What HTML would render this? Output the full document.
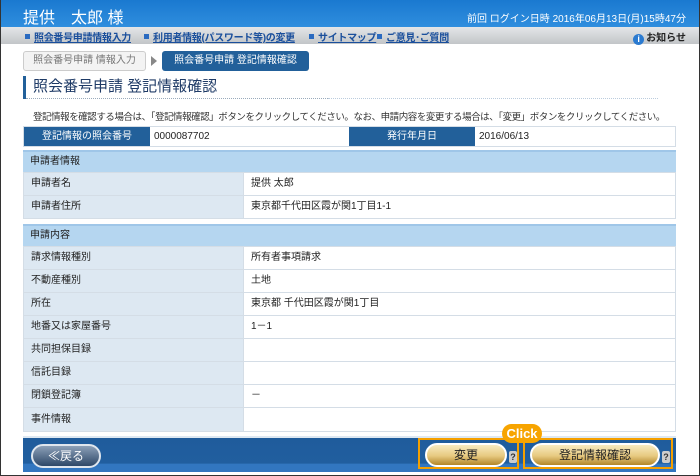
<!DOCTYPE html>
<html><head><meta charset="utf-8"><style>
*{margin:0;padding:0;box-sizing:border-box}
body{width:700px;height:476px;overflow:hidden;background:#fff;font-family:"Liberation Sans","Noto Sans CJK JP",sans-serif;font-size:10px;color:#222;position:relative}
.frame{position:absolute;left:0;top:0;width:700px;height:476px;border:1px solid #333;border-top:none;pointer-events:none}
.hdr{position:absolute;left:0;top:0;width:700px;height:27px;background:linear-gradient(#1a79d0,#2f8ede);color:#fff}
.hdr .n{position:absolute;left:23px;top:4px;font-size:16px}
.hdr .d{position:absolute;right:14px;top:10px;font-size:10px}
.nav{position:absolute;left:0;top:27px;width:700px;height:17px;background:linear-gradient(#e4e6e8,#c2c5c8);font-size:10px;font-weight:bold}
.nav a{position:absolute;top:2px;color:#1a4f9c;text-decoration:underline;letter-spacing:-0.3px}
.nav a:before{content:"";display:inline-block;width:5px;height:5px;background:#2a6ac0;margin-right:4px;vertical-align:2px}
.info{position:absolute;right:14px;top:2px;color:#222}
.info i{display:inline-block;width:11px;height:11px;border-radius:50%;background:#2a7ad0;color:#fff;font-style:normal;font-size:9px;text-align:center;line-height:11px;vertical-align:-1px;margin-right:2px}
.bc1{position:absolute;left:23px;top:51px;width:123px;height:20px;border:1px solid #ccc;border-radius:3px;background:#f3f3f3;color:#777;font-size:10px;text-align:center;line-height:18px}
.arr{position:absolute;left:151px;top:56px;width:0;height:0;border-left:6px solid #888;border-top:5px solid transparent;border-bottom:5px solid transparent}
.bc2{position:absolute;left:162px;top:51px;width:147px;height:20px;border-radius:3px;background:#22609a;color:#fff;font-size:10px;text-align:center;line-height:20px}
.ttl{position:absolute;left:23px;top:76px;width:305px;height:23px;border-left:3px solid #22609a;padding-left:7px;font-size:15px;color:#1e3a66;line-height:22px}
.ttlline{position:absolute;left:26px;top:98px;width:302px;border-top:1px dotted #9ab}
.ttlline2{position:absolute;left:328px;top:98px;width:330px;border-top:1px dotted #bcd}
.msg{position:absolute;left:33px;top:109px;font-size:9.5px;letter-spacing:-0.45px;color:#333;white-space:nowrap}
.row{position:absolute;left:23px;width:653px;background:#fff;border:1px solid #d4dde6}
.lab{position:absolute;left:0;top:0;bottom:0;width:220px;background:#dde8f2;padding-left:7px;border-right:1px solid #d4dde6}
.val{position:absolute;left:227px;top:0}
.sec{position:absolute;left:23px;width:653px;height:22px;background:#b5d6f0;border-top:2px solid #9fc6e8;padding-left:7px;line-height:19px}
.foot{position:absolute;left:23px;top:436px;width:653px;height:36px;background:linear-gradient(#1f5c9c 0,#215e9f 75%,#3276c0 76%);border-top:2px solid #dde8f2}
.back{position:absolute;left:8px;top:6px;width:70px;height:24px;border-radius:12px;background:linear-gradient(#8ca0b8,#2e4868);border:2px solid #dfe6ee;color:#fff;font-size:12px;text-align:center;line-height:20px}
.gold{position:absolute;top:5px;height:24px;border-radius:12px;background:linear-gradient(#f8eac0,#e7c980 55%,#b38628);border:2px solid #fff;font-size:12px;text-align:center;line-height:20px;color:#222}
.q{position:absolute;top:13px;width:8px;height:12px;background:#ccc;border-radius:2px;font-size:9px;text-align:center;line-height:12px;color:#333;font-weight:bold}
.ob{position:absolute;border:2px solid #f5a000}
.click{position:absolute;left:502px;top:424px;width:40px;height:19px;border-radius:10px;background:#f7a400;color:#fff;font-weight:bold;font-size:13px;text-align:center;line-height:19px}
</style></head><body>
<div class="hdr"><div class="n">提供　太郎 様</div><div class="d">前回 ログイン日時 2016年06月13日(月)15時47分</div></div>
<div class="nav"><a style="left:25px">照会番号申請情報入力</a><a style="left:144px">利用者情報(パスワード等)の変更</a><a style="left:309px">サイトマップ</a><a style="left:377px">ご意見･ご質問</a><span class="info"><i>i</i>お知らせ</span></div>
<div class="bc1">照会番号申請 情報入力</div><div class="arr"></div><div class="bc2">照会番号申請 登記情報確認</div>
<div class="ttl">照会番号申請 登記情報確認</div><div class="ttlline"></div><div class="ttlline2"></div>
<div class="msg">登記情報を確認する場合は、「登記情報確認」ボタンをクリックしてください。なお、申請内容を変更する場合は、「変更」ボタンをクリックしてください。</div>
<div class="row" style="top:126px;height:21px">
<div style="position:absolute;left:0;top:0;width:126px;height:19px;background:#22609a;color:#fff;text-align:center;line-height:19px">登記情報の照会番号</div>
<div style="position:absolute;left:130px;top:4px">0000087702</div>
<div style="position:absolute;left:325px;top:0;width:126px;height:19px;background:#22609a;color:#fff;text-align:center;line-height:19px">発行年月日</div>
<div style="position:absolute;left:455px;top:4px">2016/06/13</div></div>
<div class="sec" style="top:150px">申請者情報</div>
<div class="row" style="top:172px;height:24px"><div class="lab" style="line-height:22px">申請者名</div><div class="val" style="line-height:22px">提供 太郎</div></div>
<div class="row" style="top:195px;height:24px"><div class="lab" style="line-height:22px">申請者住所</div><div class="val" style="line-height:22px">東京都千代田区霞が関1丁目1-1</div></div>
<div class="sec" style="top:224px">申請内容</div>
<div class="row" style="top:246px;height:24px"><div class="lab" style="line-height:22px">請求情報種別</div><div class="val" style="line-height:22px">所有者事項請求</div></div>
<div class="row" style="top:269px;height:24px"><div class="lab" style="line-height:22px">不動産種別</div><div class="val" style="line-height:22px">土地</div></div>
<div class="row" style="top:292px;height:24px"><div class="lab" style="line-height:22px">所在</div><div class="val" style="line-height:22px">東京都 千代田区霞が関1丁目</div></div>
<div class="row" style="top:315px;height:24px"><div class="lab" style="line-height:22px">地番又は家屋番号</div><div class="val" style="line-height:22px">1－1</div></div>
<div class="row" style="top:338px;height:24px"><div class="lab" style="line-height:22px">共同担保目録</div><div class="val"></div></div>
<div class="row" style="top:361px;height:24px"><div class="lab" style="line-height:22px">信託目録</div><div class="val"></div></div>
<div class="row" style="top:384px;height:24px"><div class="lab" style="line-height:22px">閉鎖登記簿</div><div class="val" style="line-height:22px">－</div></div>
<div class="row" style="top:407px;height:25px"><div class="lab" style="line-height:23px">事件情報</div><div class="val"></div></div>
<div class="foot">
<div class="back">≪戻る</div>
<div class="gold" style="left:402px;width:82px">変更</div><div class="q" style="left:486px">?</div>
<div class="gold" style="left:507px;width:130px">登記情報確認</div><div class="q" style="left:639px">?</div>
</div>
<div class="ob" style="left:418px;top:438px;width:101px;height:31px"></div>
<div class="ob" style="left:523px;top:438px;width:150px;height:31px"></div>
<div class="click">Click</div>
<div class="frame"></div>
</body></html>
